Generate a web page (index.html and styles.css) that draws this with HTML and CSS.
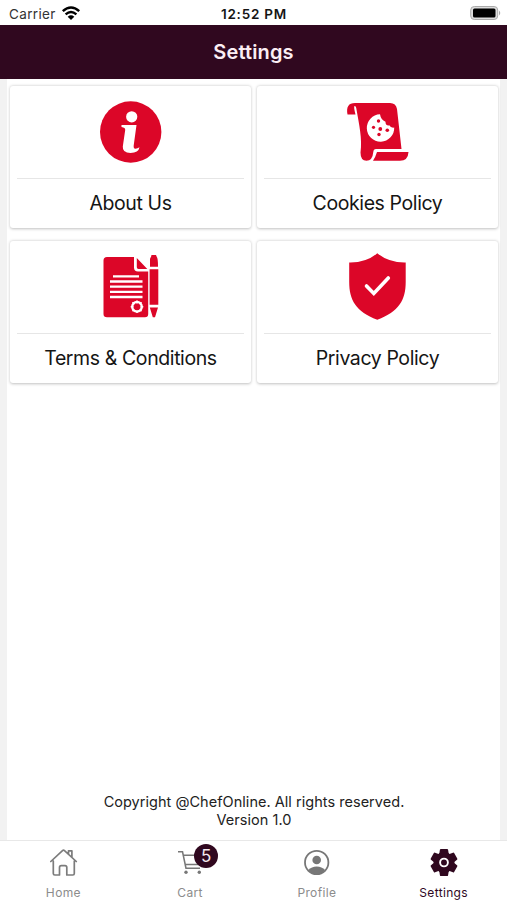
FILE: index.html
```html
<!DOCTYPE html>
<html lang="en">
<head>
<meta charset="utf-8">
<title>Settings</title>
<link rel="stylesheet" href="styles.css">
</head>
<body>
<div class="status">
  <div class="carrier"><span>Carrier</span>
    <svg class="wifi" width="20" height="16" viewBox="61 6 20 16" fill="none" stroke="#000" stroke-width="2.4"><path d="M62.800 11.200Q71 3.600 79.200 11.200M65.600 14.400Q71 9.600 76.400 14.400"/><path d="M67.700 16.700Q71 13.800 74.300 16.700L71 20Z" fill="#000" stroke="none"/></svg>
  </div>
  <div class="clock">12:52 PM</div>
  <svg class="battery" width="31" height="16" viewBox="470 6 31 16"><rect x="470.700" y="6.500" width="27" height="13" rx="3.600" fill="#ddd" stroke="#aaa"/><rect x="473" y="8.500" width="22.500" height="9" rx="1.500"/><path d="M499 10.500Q501.500 13 499 15.500Z" fill="#aaa"/></svg>
</div>
<header class="header">Settings</header>
<main class="content">
  <div class="grid">
    <section class="card">
      <svg class="art" viewBox="94.500 86 72 92"><circle cx="130.200" cy="132" r="30.700" fill="#dc0628"/><g fill="#fff"><circle cx="131.200" cy="116.800" r="5.600"/><path d="M121 125H136L133.200 145.500Q132.900 149 135 148.800Q137 148.600 139 147.300Q138 153 130 153Q121.800 153 122.300 146.500L124.700 130Q125 127.600 121 127Z"/></g></svg>
      <h2 class="label">About Us</h2>
    </section>
    <section class="card">
      <svg class="art" viewBox="342 86 72 92"><g fill="#dc0628"><path d="M355 103H390Q396 103 397 109L401.500 149H376Q373.500 149 373.300 152Q372.500 160.800 366.500 160.800Q360.500 160.800 360.500 152.500C362.500 139 359 124 356.500 109.500Q356 105.500 354.500 106Q353.500 107 355.500 114.500H347.500Q345.300 103 355 103Z"/><path d="M377 152H408.500Q408 160.800 400 160.800H373Q375.500 157 377 152Z"/></g><path d="M380 114.300A13.700 13.700 0 1 0 394.200 127.500Q391 128.200 389.200 125.200Q385.500 126.200 385.500 121.800Q380.800 119.800 380 114.300Z" fill="#fff"/><g fill="#dc0628"><circle cx="378.500" cy="121" r="1.700"/><circle cx="373.500" cy="127.300" r="1.600"/><circle cx="380.300" cy="129" r="1.900"/><circle cx="387.300" cy="130.200" r="1.800"/><circle cx="379" cy="134.500" r="1.700"/></g></svg>
      <h2 class="label">Cookies Policy</h2>
    </section>
    <section class="card">
      <svg class="art" viewBox="95 241 72 92"><g fill="#dc0628"><path d="M107 257H134V267.500Q134 271.500 138 271.500H148.200V314Q148.200 317.300 145 317.300H107Q103.500 317.300 103.500 314V260.500Q103.500 257 107 257Z"/><path d="M136.800 258L147.300 269H138.500Q136.800 269 136.800 267.200ZM150 266.800V259.500Q150 257.500 151 257L151.500 255H156L156.800 257Q158 258 158 266.800ZM149.600 269.200H158.300V304.800H149.600ZM149.800 307.400H158L155 317.300H152.800Z"/></g><path d="M113 276.300H139M110 281.500H142.500M110 286.700H142.500M110 291.900H142.500M110 297H142.500" stroke="#fff" stroke-width="2.300"/><circle cx="137" cy="306.800" r="4.700" fill="none" stroke="#fff" stroke-width="2.500"/><path d="M137 300.500V313.100M130.700 306.800H143.300M132.500 302.300L141.500 311.300M132.500 311.300L141.500 302.300" stroke="#fff" stroke-width="1.500"/><circle cx="137" cy="306.800" r="3.400" fill="#dc0628"/></svg>
      <h2 class="label">Terms &amp; Conditions</h2>
    </section>
    <section class="card">
      <svg class="art" viewBox="342 241 72 92"><path d="M377.300 253.300Q389 262.800 405.700 262.400V282C405.700 300 399 311.500 377.300 319.800C355.800 311.500 349.200 300 349.200 282V262.400Q366 262.800 377.300 253.300Z" fill="#dc0628"/><path d="M366.500 286L373.800 293.500L388.300 278" fill="none" stroke="#fff" stroke-width="3.600" stroke-linecap="round"/></svg>
      <h2 class="label">Privacy Policy</h2>
    </section>
  </div>
  <footer class="legal"><div class="copyright">Copyright @ChefOnline. All rights reserved.</div><div class="version">Version 1.0</div></footer>
</main>
<nav class="tabs">
  <div class="tab">
    <svg width="36" height="40" viewBox="45.500 841 36 40" fill="none" stroke="#7c7c7c" stroke-width="1.700" stroke-linejoin="round" stroke-linecap="round"><path d="M53.800 861V873.500Q53.800 875 55.300 875H60V867.500Q60 865.700 61.800 865.700H65.500Q67.300 865.700 67.300 867.500V875H73.300Q74.800 875 74.800 873.500V861M51.300 861.500L63 850.600Q64 849.700 65 850.600L76.800 861.500M69 853.700V850.800H72.400V857"/></svg>
    <span>Home</span></div>
  <div class="tab">
    <div class="cart"><svg width="36" height="40" viewBox="172 841 36 40" fill="none" stroke="#777" stroke-width="1.600"><path d="M178 851.700H182.500L186 868.300H200M183.300 855.300H202L199.800 864.500H185.500"/><g fill="#777" stroke="none"><circle cx="186" cy="872.300" r="1.700"/><circle cx="199.300" cy="872.300" r="1.700"/></g></svg><b class="badge">5</b></div>
    <span>Cart</span></div>
  <div class="tab">
    <svg width="36" height="40" viewBox="299 841 36 40"><circle cx="316.700" cy="862.500" r="11.700" fill="none" stroke="#777" stroke-width="1.800"/><circle cx="316.700" cy="860" r="4.300" fill="#777"/><path d="M308.300 870Q311.500 866.500 316.700 866.500T325.100 870Q321.500 874.500 316.700 874.500T308.300 870Z" fill="#777"/></svg>
    <span>Profile</span></div>
  <div class="tab active">
    <svg width="36" height="40" viewBox="425.500 841 36 40"><g fill="#30081f" stroke="#30081f" stroke-linejoin="round"><circle cx="443.500" cy="862.500" r="10"/><g stroke-width="2"><path d="M439.600 855L440.400 850H446.600L447.400 855Z"/><path d="M439.600 855L440.400 850H446.600L447.400 855Z" transform="rotate(60 443.500 862.500)"/><path d="M439.600 855L440.400 850H446.600L447.400 855Z" transform="rotate(120 443.500 862.500)"/><path d="M439.600 855L440.400 850H446.600L447.400 855Z" transform="rotate(180 443.500 862.500)"/><path d="M439.600 855L440.400 850H446.600L447.400 855Z" transform="rotate(240 443.500 862.500)"/><path d="M439.600 855L440.400 850H446.600L447.400 855Z" transform="rotate(300 443.500 862.500)"/></g></g><circle cx="443.500" cy="862.500" r="3.900" fill="none" stroke="#fff" stroke-width="1.900"/></svg>
    <span>Settings</span></div>
</nav>
</body>
</html>
```
FILE: styles.css
```css
* { box-sizing: border-box; }
body {
  margin: 0;
  height: 900px;
  display: flex;
  flex-direction: column;
  overflow: hidden;
  background: #fff;
  color: #151515;
  font-family: Inter, "Liberation Sans", sans-serif;
}
svg { display: block; flex: none; }
.status {
  height: 25px;
  padding: 2px 6px 0 9px;
  display: grid;
  grid-template-columns: 1fr 66px 1fr;
  align-items: center;
  font-size: 13.5px;
}
.carrier { display: flex; align-items: center; gap: 5px; letter-spacing: 0.35px; color: #333; }
.clock { font-weight: 600; letter-spacing: 0.75px; white-space: nowrap; margin-left: -1px; }
.battery { justify-self: end; }
.header {
  height: 54px;
  display: flex;
  align-items: center;
  justify-content: center;
  background: #30081f;
  color: #fbeef4;
  font-size: 20px;
  font-weight: 600;
  letter-spacing: 0.15px;
}
.content {
  height: 761px;
  border: solid #f2f2f2;
  border-width: 0 7px;
  padding: 7px 2px 12px 3px;
  display: flex;
  flex-direction: column;
  justify-content: space-between;
}
.grid { display: grid; grid-template-columns: 241px 241px; gap: 13px 6px; }
.card {
  height: 142px;
  padding: 0 7px;
  border-radius: 3px;
  box-shadow: 0 0.5px 3px rgba(0, 0, 0, 0.25);
}
.art { width: 72px; height: 92px; margin: 0 auto; }
.label {
  height: 49px;
  margin: 0;
  border-top: 1px solid #e6e6e6;
  line-height: 48px;
  font-size: 19.5px;
  font-weight: 400;
  letter-spacing: -0.4px;
  text-align: center;
  white-space: nowrap;
}
.legal { font-size: 14.5px; line-height: 17.5px; text-align: center; color: #222; letter-spacing: 0.03px; }
.tabs {
  height: 60px;
  border-top: 1px solid #e8e8e8;
  display: grid;
  grid-template-columns: repeat(4, 1fr);
}
.tab {
  display: flex;
  flex-direction: column;
  align-items: center;
  font-size: 12px;
  line-height: 23px;
  letter-spacing: 0.35px;
  color: #8c8c8c;
}
.active { color: #30081f; }
.cart { position: relative; }
.badge {
  position: absolute;
  left: 22px;
  top: 3px;
  width: 24px;
  height: 24px;
  border-radius: 50%;
  background: #30081f;
  color: #f4e8ee;
  font-size: 17px;
  font-weight: 400;
  line-height: 24px;
  letter-spacing: 0;
  text-align: center;
}
```
